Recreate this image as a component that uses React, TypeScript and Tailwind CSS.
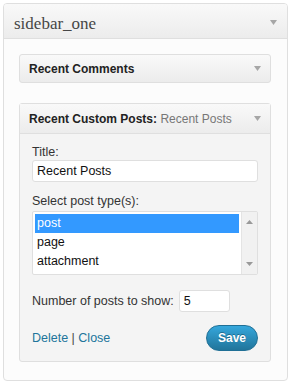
import React from "react";

const Arrow = ({ className = "" }: { className?: string }) => (
  <svg width="7" height="5" viewBox="0 0 7 5" className={className}>
    <polygon points="0,0 7,0 3.5,5" fill="#a6a6a6" />
  </svg>
);

export default function App() {
  return (
    <div
      className="w-[291px] h-[386px] bg-white pt-[3px] pl-[3px]"
      style={{ fontFamily: '"Liberation Sans", Arial, sans-serif' }}
    >
      <div className="w-[285px] h-[378px] border border-[#dfdfdf] rounded-[4px] bg-[#fcfcfc] flex flex-col overflow-hidden">
        {/* header */}
        <div className="h-[35px] shrink-0 flex items-center justify-between pl-[10px] pr-[10px] border-b border-[#dfdfdf] bg-gradient-to-b from-[#f9f9f9] to-[#ececec]">
          <span
            className="text-[17px] text-[#464646] leading-none mt-[4px]"
            style={{ fontFamily: '"Liberation Serif", Georgia, serif' }}
          >
            sidebar_one
          </span>
          <Arrow className="mt-[2px]" />
        </div>
        {/* body */}
        <div className="flex flex-col pt-[15px] pl-[15px] pr-[16px]">
          {/* Recent Comments */}
          <div className="h-[29px] border border-[#dfdfdf] rounded-[3px] bg-gradient-to-b from-[#f9f9f9] to-[#ececec] flex items-center justify-between pl-[9px] pr-[9px]">
            <span className="text-[12px] font-bold text-[#222]">Recent Comments</span>
            <Arrow />
          </div>
          {/* Recent Custom Posts */}
          <div className="mt-[20px] border border-[#dfdfdf] rounded-[3px] bg-[#f4f4f4] flex flex-col">
            <div className="h-[30px] border-b border-[#dfdfdf] bg-gradient-to-b from-[#f9f9f9] to-[#ececec] flex items-center justify-between pl-[9px] pr-[9px]">
              <span className="text-[12px] text-[#222]">
                <span className="font-bold">Recent Custom Posts:</span>{" "}
                <span className="text-[#777]">Recent Posts</span>
              </span>
              <Arrow />
            </div>
            <div className="flex flex-col px-[12px] pt-[10px] pb-[10px] text-[12.5px] text-[#333]">
              <div className="h-[14px] leading-[14px] mt-[1px]">Title:</div>
              <div className="mt-[1px] h-[22px] border border-[#dfdfdf] rounded-[3px] bg-white flex items-center pl-[4px] text-[#111]">
                Recent Posts
              </div>
              <div className="mt-[12px] h-[14px] leading-[14px]">Select post type(s):</div>
              <div className="mt-[3px] h-[64px] border border-[#dfdfdf] rounded-[2px] bg-white flex text-[#111]">
                <div className="flex-1 flex flex-col pt-[2px] pl-[2px] pr-[2px]">
                  <div className="h-[19px] bg-[#3399ff] text-white flex items-center pl-[2px]">post</div>
                  <div className="h-[19px] flex items-center pl-[2px]">page</div>
                  <div className="h-[19px] flex items-center pl-[2px]">attachment</div>
                </div>
                <div className="w-[16px] bg-[#f1f1f1] border-l border-[#e4e4e4] flex flex-col items-center justify-between py-[8px]">
                  <svg width="7" height="4" viewBox="0 0 7 4">
                    <polygon points="3.5,0 7,4 0,4" fill="#999" />
                  </svg>
                  <svg width="7" height="4" viewBox="0 0 7 4">
                    <polygon points="0,0 7,0 3.5,4" fill="#999" />
                  </svg>
                </div>
              </div>
              <div className="mt-[15px] flex items-center">
                <span>Number of posts to show:</span>
                <div className="ml-[5px] w-[51px] h-[22px] border border-[#dfdfdf] rounded-[3px] bg-white flex items-center pl-[4px] text-[#111]">
                  5
                </div>
              </div>
              <div className="mt-[13px] flex items-center justify-between">
                <span className="text-[#21759b]">
                  Delete <span className="text-[#464646]">|</span> Close
                </span>
                <button className="w-[52px] h-[26px] rounded-full border border-[#1f6f95] bg-gradient-to-b from-[#35a7dc] to-[#21759b] text-white text-[12px] font-bold flex items-center justify-center [text-shadow:0_-1px_0_rgba(0,0,0,0.3)]">
                  Save
                </button>
              </div>
            </div>
          </div>
        </div>
      </div>
    </div>
  );
}
